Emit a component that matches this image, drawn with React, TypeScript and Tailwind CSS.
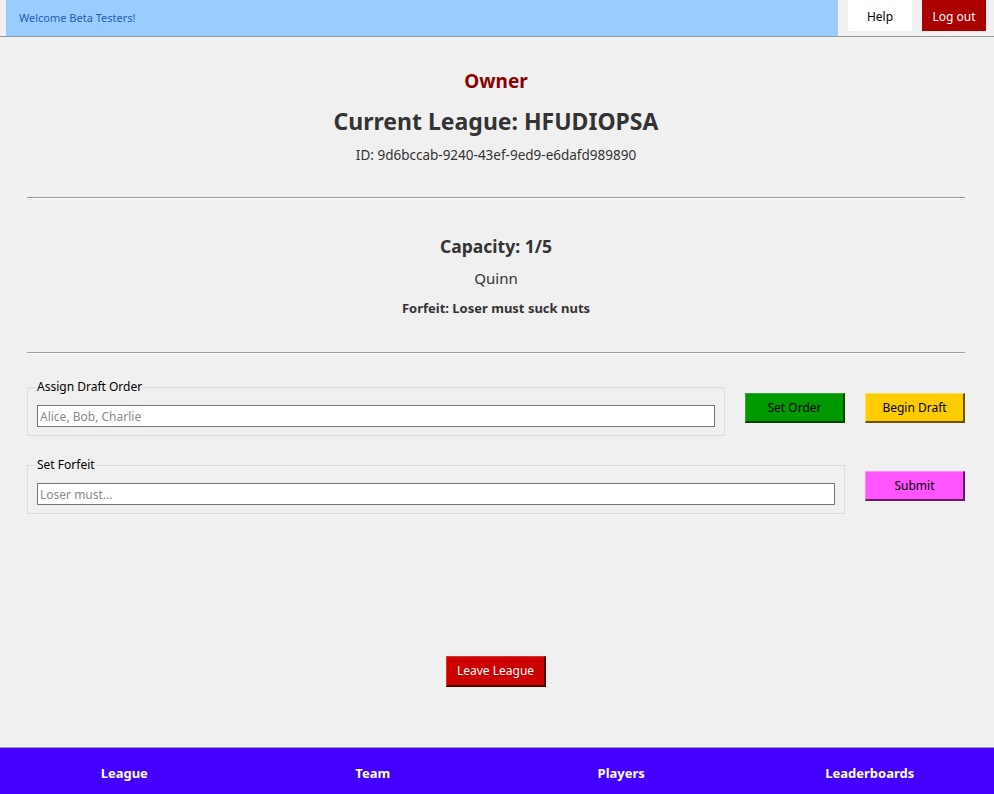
import { useState } from "react";

const FONT = { fontFamily: '"Noto Sans", "Open Sans", sans-serif' };

function Fieldset({
  legend,
  placeholder,
  value,
  onChange,
  className,
}: {
  legend: string;
  placeholder: string;
  value: string;
  onChange: (v: string) => void;
  className: string;
}) {
  return (
    <fieldset className={`border border-[#dcdcdc] px-[9px] pb-[8px] pt-[11px] ${className}`}>
      <legend className="ml-[-1px] px-[1px] text-[12px] leading-[14px] text-black">{legend}</legend>
      <input
        value={value}
        onChange={(e) => onChange(e.target.value)}
        placeholder={placeholder}
        className="block h-[22px] w-full border border-[#767676] bg-white px-[2px] text-[12px] text-black outline-none placeholder:text-[#8a8a8a]"
      />
    </fieldset>
  );
}

export default function App() {
  const [order, setOrder] = useState("");
  const [forfeit, setForfeit] = useState("");

  return (
    <div className="flex h-screen flex-col bg-[#f0f0f0] text-[#333]" style={FONT}>
      {/* top bar */}
      <div className="flex h-[37px] shrink-0 border-b border-[#9a9a9a] pl-[6px]">
        <div className="flex flex-1 items-center bg-[#99ccff] pl-[13px] text-[11px] text-[#1a5fb4]">
          Welcome Beta Testers!
        </div>
        <div className="flex items-start gap-[10px] pl-[10px] pr-[8px]">
          <button className="h-[31px] w-[64px] bg-white pt-[2px] text-[12px] text-black">Help</button>
          <button className="h-[31px] w-[64px] bg-[#aa0000] pt-[2px] text-[12px] text-white">Log out</button>
        </div>
      </div>

      <main className="flex-1 pl-[27px] pr-[29px]">
        <div className="mt-[30px] text-center">
          <h3 className="text-[19px] font-bold leading-[28px] text-[#8b0000]">Owner</h3>
          <h2 className="mt-[10px] text-[23px] font-bold leading-[32px]">Current League: HFUDIOPSA</h2>
          <p className="mt-[9px] text-[13.5px] leading-[18px]">ID: 9d6bccab-9240-43ef-9ed9-e6dafd989890</p>
        </div>

        <hr className="mt-[33px] border-t border-b border-t-[#9a9a9a] border-b-white" />

        <div className="mt-[35px] text-center">
          <h3 className="text-[17.5px] font-bold leading-[25px]">Capacity: 1/5</h3>
          <p className="mt-[9px] text-[15px] leading-[20px]">Quinn</p>
          <p className="mt-[11px] text-[13px] font-bold leading-[18px]">Forfeit: Loser must suck nuts</p>
        </div>

        <hr className="mt-[35px] border-t border-b border-t-[#9a9a9a] border-b-white" />

        <div className="mt-[26px] flex items-start gap-[20px]">
          <Fieldset
            legend="Assign Draft Order"
            placeholder="Alice, Bob, Charlie"
            value={order}
            onChange={setOrder}
            className="w-[698px]"
          />
          <button className="mt-[13px] h-[30px] w-[100px] border-l border-t border-r-2 border-b-2 border-l-[#33aa33] border-t-[#33aa33] border-r-[#004400] border-b-[#004400] bg-[#009900] text-[12px] text-black">
            Set Order
          </button>
          <button className="mt-[13px] h-[30px] w-[100px] border-l border-t border-r-2 border-b-2 border-l-[#ffdd55] border-t-[#ffdd55] border-r-[#6b5500] border-b-[#6b5500] bg-[#ffcc00] text-[12px] text-black">
            Begin Draft
          </button>
        </div>

        <div className="mt-[22px] flex items-start gap-[20px]">
          <Fieldset
            legend="Set Forfeit"
            placeholder="Loser must..."
            value={forfeit}
            onChange={setForfeit}
            className="w-[818px]"
          />
          <button className="mt-[13px] h-[30px] w-[100px] border-l border-t border-r-2 border-b-2 border-l-[#ff88ff] border-t-[#ff88ff] border-r-[#6b1a6b] border-b-[#6b1a6b] bg-[#ff55ff] text-[12px] text-black">
            Submit
          </button>
        </div>

        <div className="mt-[142px] flex justify-center">
          <button className="h-[31px] w-[100px] border-l border-t border-r-2 border-b-2 border-l-[#dd3333] border-t-[#dd3333] border-r-[#550000] border-b-[#550000] bg-[#cc0000] text-[12px] text-white">
            Leave League
          </button>
        </div>
      </main>

      {/* bottom nav */}
      <nav className="grid h-[47px] shrink-0 grid-cols-4 border-t border-[#9a9a9a] bg-[#4400ff] pt-[5px] text-[13px] font-bold text-white">
        {["League", "Team", "Players", "Leaderboards"].map((t) => (
          <a key={t} href="#" className="flex items-center justify-center">
            {t}
          </a>
        ))}
      </nav>
    </div>
  );
}
